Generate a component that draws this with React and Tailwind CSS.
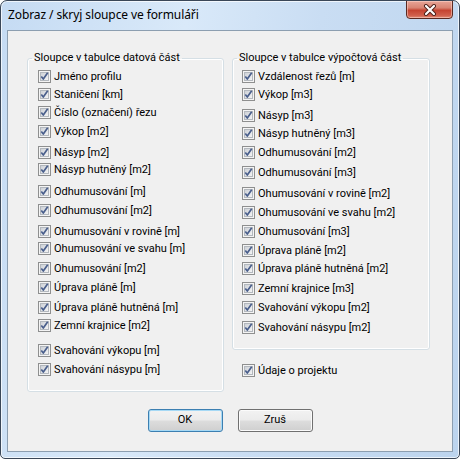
const titleFont = { fontFamily: '"Noto Sans", "Segoe UI", sans-serif' };
const bodyFont = { fontFamily: 'Roboto, "Segoe UI", sans-serif' };

const leftRows = [
  ["Jméno profilu", "mt-0"],
  ["Staničení [km]", "mt-[1px]"],
  ["Číslo (označení) řezu", "mt-[1px]"],
  ["Výkop [m2]", "mt-[2px]"],
  ["Násyp [m2]", "mt-[4px]"],
  ["Násyp hutněný [m2]", "mt-0"],
  ["Odhumusování [m]", "mt-[5px]"],
  ["Odhumusování [m2]", "mt-[2px]"],
  ["Ohumusování v rovině [m]", "mt-[4px]"],
  ["Ohumusování ve svahu [m]", "mt-0"],
  ["Ohumusování [m2]", "mt-[3px]"],
  ["Úprava pláně [m]", "mt-[2px]"],
  ["Úprava pláně hutněná [m]", "mt-[3px]"],
  ["Zemní krajnice [m2]", "mt-[1px]"],
  ["Svahování výkopu [m]", "mt-[8px]"],
  ["Svahování násypu [m]", "mt-[2px]"],
];

const rightRows = [
  ["Vzdálenost řezů [m]", "mt-0"],
  ["Výkop [m3]", "mt-[1px]"],
  ["Násyp [m3]", "mt-[4px]"],
  ["Násyp hutněný [m3]", "mt-[1px]"],
  ["Odhumusování [m2]", "mt-[2px]"],
  ["Odhumusování [m3]", "mt-[3px]"],
  ["Ohumusování v rovině [m2]", "mt-[4px]"],
  ["Ohumusování ve svahu [m2]", "mt-[2px]"],
  ["Ohumusování [m3]", "mt-[2px]"],
  ["Úprava pláně [m2]", "mt-[2px]"],
  ["Úprava pláně hutněná [m2]", "mt-[1px]"],
  ["Zemní krajnice [m3]", "mt-[3px]"],
  ["Svahování výkopu [m2]", "mt-[2px]"],
  ["Svahování násypu [m2]", "mt-[3px]"],
];

function CheckBox() {
  return (
    <svg width="13" height="13" viewBox="0 0 13 13" className="shrink-0">
      <defs>
        <linearGradient id="cbg" x1="0" y1="0" x2="1" y2="1">
          <stop offset="0" stopColor="#cbcfd5" />
          <stop offset="1" stopColor="#f6f6f6" />
        </linearGradient>
      </defs>
      <rect x="0.5" y="0.5" width="12" height="12" fill="#f4f4f4" stroke="#8e8f8f" />
      <rect x="2.5" y="2.5" width="8" height="8" fill="url(#cbg)" stroke="#b3b8be" />
      <path d="M3.3 6.5 L5.3 9 L9.7 2.7" fill="none" stroke="#4a5f8c" strokeWidth="1.7" strokeLinejoin="round" />
    </svg>
  );
}

function Row({ label, mt, pad }) {
  return (
    <div className={`flex items-center h-[17px] gap-[3px] ${pad} ${mt}`}>
      <CheckBox />
      <span className="text-[11px] leading-[17px] text-black whitespace-nowrap">{label}</span>
    </div>
  );
}

function Group({ title, rows, width, pad, bottom }) {
  return (
    <fieldset
      className={`border border-[#d5dfe5] rounded-[3px] shadow-[inset_0_0_0_1px_#ffffff] pt-[2px] ${bottom} ${width}`}
    >
      <legend className="ml-[4px] px-[2px] text-[11px] leading-[16px] text-black">{title}</legend>
      {rows.map(([l, m]) => (
        <Row key={l} label={l} mt={m} pad={pad} />
      ))}
    </fieldset>
  );
}

function Button({ children, primary }) {
  return (
    <button
      className={`w-[75px] h-[23px] rounded-[3px] border text-[11px] text-black bg-[linear-gradient(#f2f2f2_0%,#ebebeb_48%,#dddddd_52%,#cfcfcf_100%)] ${
        primary
          ? "border-[#3c7fb1] shadow-[inset_0_0_0_1px_#a6d9f5]"
          : "border-[#707070] shadow-[inset_0_0_0_1px_#fbfbfb]"
      }`}
    >
      {children}
    </button>
  );
}

export default function App() {
  return (
    <div
      style={titleFont}
      className="w-[460px] h-[459px] flex flex-col border border-[#3a4758] rounded-t-[7px] rounded-b-[5px] overflow-hidden bg-[linear-gradient(100deg,#c5dbf3_0%,#d9e9f9_35%,#c9ddf3_60%,#bcd4ee_100%)] shadow-[inset_0_0_0_1px_rgba(255,255,255,0.7)]"
    >
      {/* TITLE BAR */}
      <div className="h-[29px] flex justify-between items-start">
        <span className="pl-[7px] pt-[6px] text-[12px] leading-[16px] text-black tracking-[-0.1px]">
          Zobraz / skryj sloupce ve formuláři
        </span>
        <div className="mr-[6px] w-[47px] h-[19px] -mt-px flex items-center justify-center rounded-b-[4px] border border-[#5a2a22] bg-[linear-gradient(#e8a597_0%,#d88473_40%,#c54431_55%,#d1604c_85%,#e08c77_100%)] shadow-[inset_0_0_0_1px_rgba(255,220,210,0.5)]">
          <svg width="14" height="12" viewBox="0 0 14 12">
            <path d="M3 2 L11 10 M11 2 L3 10" stroke="#4d2019" strokeWidth="4" strokeLinecap="round" />
            <path d="M3 2 L11 10 M11 2 L3 10" stroke="#ffffff" strokeWidth="2.2" strokeLinecap="round" />
          </svg>
        </div>
      </div>

      {/* CLIENT */}
      <div style={bodyFont} className="mx-[6px] w-[446px] h-[422px] border border-[#8c9eb0] bg-[#f0f0f0] flex flex-col">
        <div className="flex items-start gap-[8px] pl-[19px] pt-[19px]">
          <Group title="Sloupce v tabulce datová část" rows={leftRows} width="w-[197px]" pad="pl-[10px]" bottom="pb-[13px]" />
          <div className="flex flex-col">
            <Group title="Sloupce v tabulce výpočtová část" rows={rightRows} width="w-[198px]" pad="pl-[9px]" bottom="pb-[13px]" />
            <Row label="Údaje o projektu" mt="mt-[12px]" pad="pl-[10px]" />
          </div>
        </div>

        <div className="flex justify-center gap-[15px] mt-[17px]">
          <Button primary>OK</Button>
          <Button>Zruš</Button>
        </div>
      </div>
    </div>
  );
}
